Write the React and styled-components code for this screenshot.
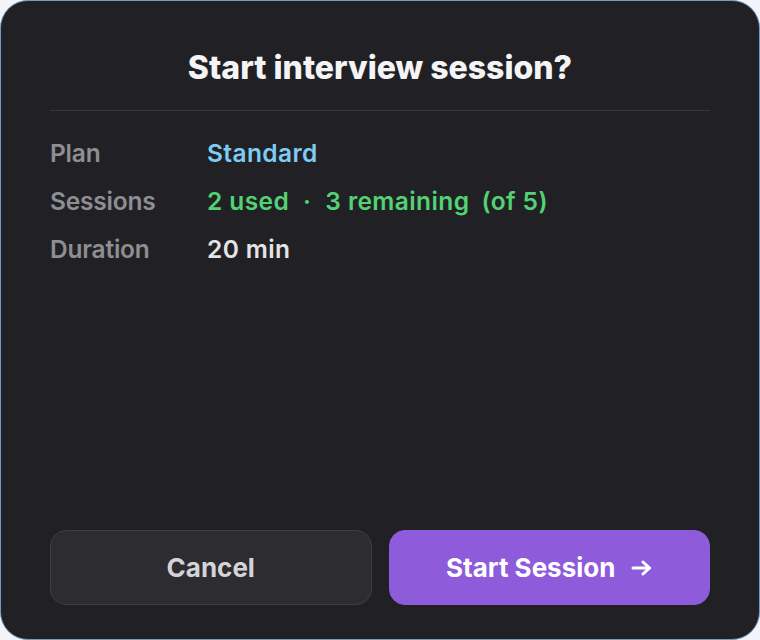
import React from 'react'
import styled, { createGlobalStyle } from 'styled-components'

const GlobalStyle = createGlobalStyle`
    html, body {
        margin: 0;
        padding: 0;
        background: #f2f4f7;
    }
    body {
        font-family: Inter, "Noto Sans", "Liberation Sans", sans-serif;
        -webkit-font-smoothing: antialiased;
    }
`

const plan = { name: 'Standard', used: 2, total: 5, minutes: 20 }

// bold arrow, a bit wider than tall
const Arrow = () => (
    <svg width="21" height="16" viewBox="0 0 21 16" fill="none" stroke="currentColor" strokeWidth="3" strokeLinecap="round" strokeLinejoin="round">
        <path d="M2 8h16.5" />
        <path d="M12 2l6.5 6-6.5 6" />
    </svg>
)

export default function App() {
    return (
        <>
            <GlobalStyle />
            <Dialog>
                <Title>Start interview session?</Title>
                <Divider />
                <DetailList>
                    <DetailRow>
                        <Label>Plan</Label>
                        <Value tone="blue">{plan.name}</Value>
                    </DetailRow>
                    <DetailRow>
                        <Label>Sessions</Label>
                        <Value tone="green">
                            {plan.used} used
                            <Sep>·</Sep>
                            {plan.total - plan.used} remaining
                            <Total>(of {plan.total})</Total>
                        </Value>
                    </DetailRow>
                    <DetailRow>
                        <Label>Duration</Label>
                        <Value tone="plain">{plan.minutes} min</Value>
                    </DetailRow>
                </DetailList>
                <Actions>
                    <Button>Cancel</Button>
                    <Button primary>
                        Start Session
                        <Arrow />
                    </Button>
                </Actions>
            </Dialog>
        </>
    )
}

const tones = {
    blue: '#7ecbf3',
    green: '#52d273',
    plain: '#e4e4e7',
}

// the modal itself fills the window
const Dialog = styled.div`
    width: 760px;
    height: 640px;
    box-sizing: border-box;
    display: flex;
    flex-direction: column;
    padding: 40px 49px 34px;
    background: #212125;
    border: 1px solid #6f9cc8;
    border-radius: 28px;
    overflow: hidden;
`
const Title = styled.h1`
    margin: 0;
    height: 54px;
    line-height: 54px;
    text-align: center;
    color: #f4f4f5;
    font-size: 32px;
    font-weight: 800;
    letter-spacing: 0;
`
const Divider = styled.div`
    height: 1px;
    margin-top: 15px;
    background: #38383d;
`
const DetailList = styled.div`
    display: flex;
    flex-direction: column;
    margin-top: 18px;
    flex-grow: 1;
`
const DetailRow = styled.div`
    display: grid;
    grid-template-columns: 157px 1fr;
    height: 48px;
    align-items: center;
    font-size: 24.5px;
    font-weight: 600;
`
const Label = styled.span`
    color: #8e8e93;
    letter-spacing: -0.2px;
`
const Value = styled.span`
    display: flex;
    align-items: center;
    color: ${(p) => tones[p.tone]};
    white-space: pre;
    letter-spacing: 0.4px;
`
const Sep = styled.span`
    margin: 0 14px;
`
const Total = styled.span`
    margin-left: 12px;
`
const Actions = styled.div`
    display: grid;
    grid-template-columns: 1fr 1fr;
    gap: 17px;
`
const Button = styled.button`
    height: 75px;
    display: flex;
    align-items: center;
    justify-content: center;
    gap: 16px;
    box-sizing: border-box;
    border-radius: 16px;
    font-family: inherit;
    font-size: 26px;
    font-weight: 700;
    cursor: pointer;
    border: 1px solid ${(p) => (p.primary ? '#8e5bdb' : '#3e3e44')};
    background: ${(p) => (p.primary ? '#8e5bdb' : '#2c2c31')};
    color: ${(p) => (p.primary ? '#ffffff' : '#d4d4d8')};
`
